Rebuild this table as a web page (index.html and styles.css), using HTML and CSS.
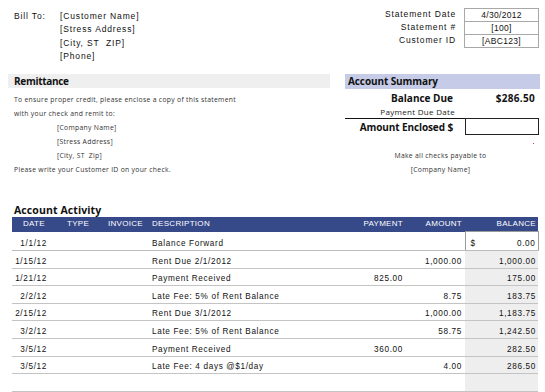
FILE: index.html
```html
<!DOCTYPE html>
<html>
<head>
<meta charset="utf-8">
<link rel="stylesheet" href="styles.css">
</head>
<body>
<div class="page">
  <header class="top">
    <div class="billto">
      <div class="bt-label">Bill To:</div>
      <div class="bt-lines">
        <div>[Customer Name]</div>
        <div>[Stress Address]</div>
        <div>[City, ST&nbsp;&nbsp;ZIP]</div>
        <div>[Phone]</div>
      </div>
    </div>
    <div class="stmt">
      <div class="stmt-labels">
        <div>Statement Date</div>
        <div>Statement #</div>
        <div>Customer ID</div>
      </div>
      <div class="stmt-box">
        <div>4/30/2012</div>
        <div>[100]</div>
        <div>[ABC123]</div>
      </div>
    </div>
  </header>

  <section class="mid">
    <div class="remit">
      <div class="remit-band">Remittance</div>
      <div class="remit-text">
        <div>To ensure proper credit, please enclose a copy of this statement</div>
        <div>with your check and remit to:</div>
        <div class="indent">[Company Name]</div>
        <div class="indent">[Stress Address]</div>
        <div class="indent">[City, ST&nbsp;&nbsp;Zip]</div>
        <div>Please write your Customer ID on your check.</div>
      </div>
    </div>
    <div class="summary">
      <div class="sum-band">Account Summary</div>
      <div class="sum-grid">
        <div class="sum-label bold">Balance Due</div>
        <div class="sum-value bold">$286.50</div>
        <div class="sum-label small line">Payment Due Date</div>
        <div class="sum-value line"></div>
        <div class="sum-label bold enclosed">Amount Enclosed $</div>
        <div class="sum-box"><span class="red-dot"></span></div>
      </div>
      <div class="payable">
        <div>Make all checks payable to</div>
        <div>[Company Name]</div>
      </div>
    </div>
  </section>

  <section class="activity">
    <h2 class="act-title">Account Activity</h2>
    <table class="act-table">
      <thead>
        <tr>
          <th class="c-date">DATE</th>
          <th class="c-type">TYPE</th>
          <th class="c-inv">INVOICE</th>
          <th class="c-desc">DESCRIPTION</th>
          <th class="c-pay">PAYMENT</th>
          <th class="c-amt">AMOUNT</th>
          <th class="c-bal">BALANCE</th>
        </tr>
      </thead>
      <tbody>
        <tr class="first">
          <td class="c-date">1/1/12</td><td class="c-type"></td><td class="c-inv"></td>
          <td class="c-desc">Balance Forward</td><td class="c-pay"></td><td class="c-amt"></td>
          <td class="c-bal boxed"><span class="dollar">$</span>0.00</td>
        </tr>
        <tr>
          <td class="c-date">1/15/12</td><td class="c-type"></td><td class="c-inv"></td>
          <td class="c-desc">Rent Due 2/1/2012</td><td class="c-pay"></td><td class="c-amt">1,000.00</td>
          <td class="c-bal">1,000.00</td>
        </tr>
        <tr>
          <td class="c-date">1/21/12</td><td class="c-type"></td><td class="c-inv"></td>
          <td class="c-desc">Payment Received</td><td class="c-pay">825.00</td><td class="c-amt"></td>
          <td class="c-bal">175.00</td>
        </tr>
        <tr>
          <td class="c-date">2/2/12</td><td class="c-type"></td><td class="c-inv"></td>
          <td class="c-desc">Late Fee: 5% of Rent Balance</td><td class="c-pay"></td><td class="c-amt">8.75</td>
          <td class="c-bal">183.75</td>
        </tr>
        <tr>
          <td class="c-date">2/15/12</td><td class="c-type"></td><td class="c-inv"></td>
          <td class="c-desc">Rent Due 3/1/2012</td><td class="c-pay"></td><td class="c-amt">1,000.00</td>
          <td class="c-bal">1,183.75</td>
        </tr>
        <tr>
          <td class="c-date">3/2/12</td><td class="c-type"></td><td class="c-inv"></td>
          <td class="c-desc">Late Fee: 5% of Rent Balance</td><td class="c-pay"></td><td class="c-amt">58.75</td>
          <td class="c-bal">1,242.50</td>
        </tr>
        <tr>
          <td class="c-date">3/5/12</td><td class="c-type"></td><td class="c-inv"></td>
          <td class="c-desc">Payment Received</td><td class="c-pay">360.00</td><td class="c-amt"></td>
          <td class="c-bal">282.50</td>
        </tr>
        <tr>
          <td class="c-date">3/5/12</td><td class="c-type"></td><td class="c-inv"></td>
          <td class="c-desc">Late Fee: 4 days @$1/day</td><td class="c-pay"></td><td class="c-amt">4.00</td>
          <td class="c-bal">286.50</td>
        </tr>
        <tr>
          <td class="c-date"></td><td class="c-type"></td><td class="c-inv"></td>
          <td class="c-desc"></td><td class="c-pay"></td><td class="c-amt"></td>
          <td class="c-bal"></td>
        </tr>
      </tbody>
    </table>
  </section>
</div>
</body>
</html>
```

FILE: styles.css
```css
* { box-sizing: border-box; }
html, body { margin: 0; padding: 0; background: #fff; }
body {
  font-family: "Liberation Sans", Arial, sans-serif;
  color: #111;
  width: 545px;
  height: 392px;
  overflow: hidden;
}
.page { padding: 8px 0 0 0; }

/* top */
.top {
  display: flex;
  justify-content: space-between;
  height: 66px;
  font-size: 8.5px;
  letter-spacing: 0.85px;
}
.billto {
  display: flex;
  padding: 2px 0 0 14px;
  line-height: 13.4px;
}
.bt-label { width: 46px; }
.stmt {
  display: flex;
  padding-right: 6px;
}
.stmt-labels {
  text-align: right;
  line-height: 13px;
  padding-right: 8px;
}
.stmt-box {
  width: 75px;
  border: 1px solid #a8a8a8;
  align-self: flex-start;
  letter-spacing: 0.3px;
}
.stmt-box div {
  height: 13px;
  line-height: 12px;
  text-align: center;
  border-bottom: 1px solid #a8a8a8;
}
.stmt-box div:last-child { border-bottom: none; height: 12px; }

/* middle */
.mid {
  display: flex;
  gap: 15px;
  height: 130px;
}
.remit { width: 322px; margin-left: 8px; }
.remit-band {
  background: #efefef;
  height: 14px;
  line-height: 14px;
  padding-left: 6px;
  font-family: "Open Sans", sans-serif;
  font-weight: 700;
  font-size: 10px;
  letter-spacing: -0.3px;
}
.remit-text {
  margin-top: 5px;
  padding-left: 6px;
  font-family: "Open Sans", sans-serif;
  font-size: 6.8px;
  letter-spacing: 0.3px;
  line-height: 14px;
  color: #333;
}
.indent { padding-left: 43px; }

.summary { width: 195px; }
.sum-band {
  background: #c6cce7;
  height: 15px;
  line-height: 15px;
  padding-left: 3px;
  font-family: "Open Sans", sans-serif;
  font-weight: 700;
  font-size: 10px;
  letter-spacing: -0.1px;
}
.sum-grid {
  display: grid;
  grid-template-columns: 120px 74px;
  margin-top: 2px;
}
.sum-label { text-align: right; }
.sum-label.bold { padding-right: 12px; }
.bold {
  font-family: "Open Sans", sans-serif;
  font-weight: 700;
  font-size: 10px;
  height: 14px;
  line-height: 14px;
  letter-spacing: 0;
}
.sum-value.bold { text-align: right; padding-right: 4px; letter-spacing: 0.3px; }
.small {
  font-family: "Open Sans", sans-serif;
  font-size: 8px;
  letter-spacing: 0.3px;
  color: #222;
  height: 14px;
  line-height: 14px;
  padding-right: 10px;
}
.line { border-bottom: 1px solid #111; }
.sum-label.enclosed { height: 17px; line-height: 17px; letter-spacing: -0.1px; font-size: 10px; }
.sum-box {
  height: 17px;
  border: 1.5px solid #222;
  border-top-width: 1px;
  position: relative;
  margin-top: -1px;
}
.red-dot {
  position: absolute;
  right: 4px;
  top: 24px;
  width: 1px;
  height: 1px;
  background: #e33;
}
.payable {
  margin-top: 13px;
  padding-right: 4px;
  text-align: center;
  font-family: "Open Sans", sans-serif;
  font-size: 6.8px;
  letter-spacing: 0.3px;
  line-height: 14px;
  color: #333;
}

/* activity */
.activity { padding: 0 7px 0 12px; }
.act-title {
  margin: 0;
  height: 13px;
  line-height: 12px;
  padding-left: 2px;
  font-family: "Open Sans", sans-serif;
  font-weight: 700;
  font-size: 10.5px;
  letter-spacing: 0.1px;
}
.act-table {
  width: 526px;
  border-collapse: collapse;
  table-layout: fixed;
  font-size: 8.2px;
  letter-spacing: 0.65px;
}
.act-table th {
  background: #364989;
  color: #fff;
  font-weight: normal;
  height: 14px;
  line-height: 14px;
  padding: 0;
  font-size: 8px;
  letter-spacing: 0.3px;
}
.act-table td {
  height: 17.6px;
  padding: 0 0 2px 0;
  vertical-align: bottom;
  border-bottom: 1.5px solid #c4c4c4;
}
.act-table tr.first td { border-bottom: 1px solid #bbb; height: 19px; }
.c-date { width: 52px; }
.c-type { width: 41px; }
.c-inv { width: 44px; }
.c-desc { width: 191px; }
.c-pay { width: 66px; }
.c-amt { width: 59px; }
.c-bal { width: 73px; }

th.c-date { text-align: left; padding-left: 11px !important; }
th.c-type { text-align: left; padding-left: 3px !important; }
th.c-inv { text-align: left; padding-left: 3px !important; }
th.c-desc { text-align: left; padding-left: 3px !important; }
th.c-pay { text-align: right; padding-right: 3px !important; }
th.c-amt { text-align: right; padding-right: 3px !important; }
th.c-bal { text-align: right; padding-right: 2px !important; }

td.c-date { text-align: right; padding-right: 17px; }
td.c-desc { padding-left: 3px; }
td.c-pay { text-align: right; padding-right: 3px; }
td.c-amt { text-align: right; padding-right: 3px; }
td.c-bal {
  text-align: right;
  padding-right: 2px;
  background: #eeeeee;
}
td.c-bal.boxed {
  background: #fff;
  border: 1px solid #9a9a9a;
  padding-left: 5px;
}
.dollar { float: left; }
```
